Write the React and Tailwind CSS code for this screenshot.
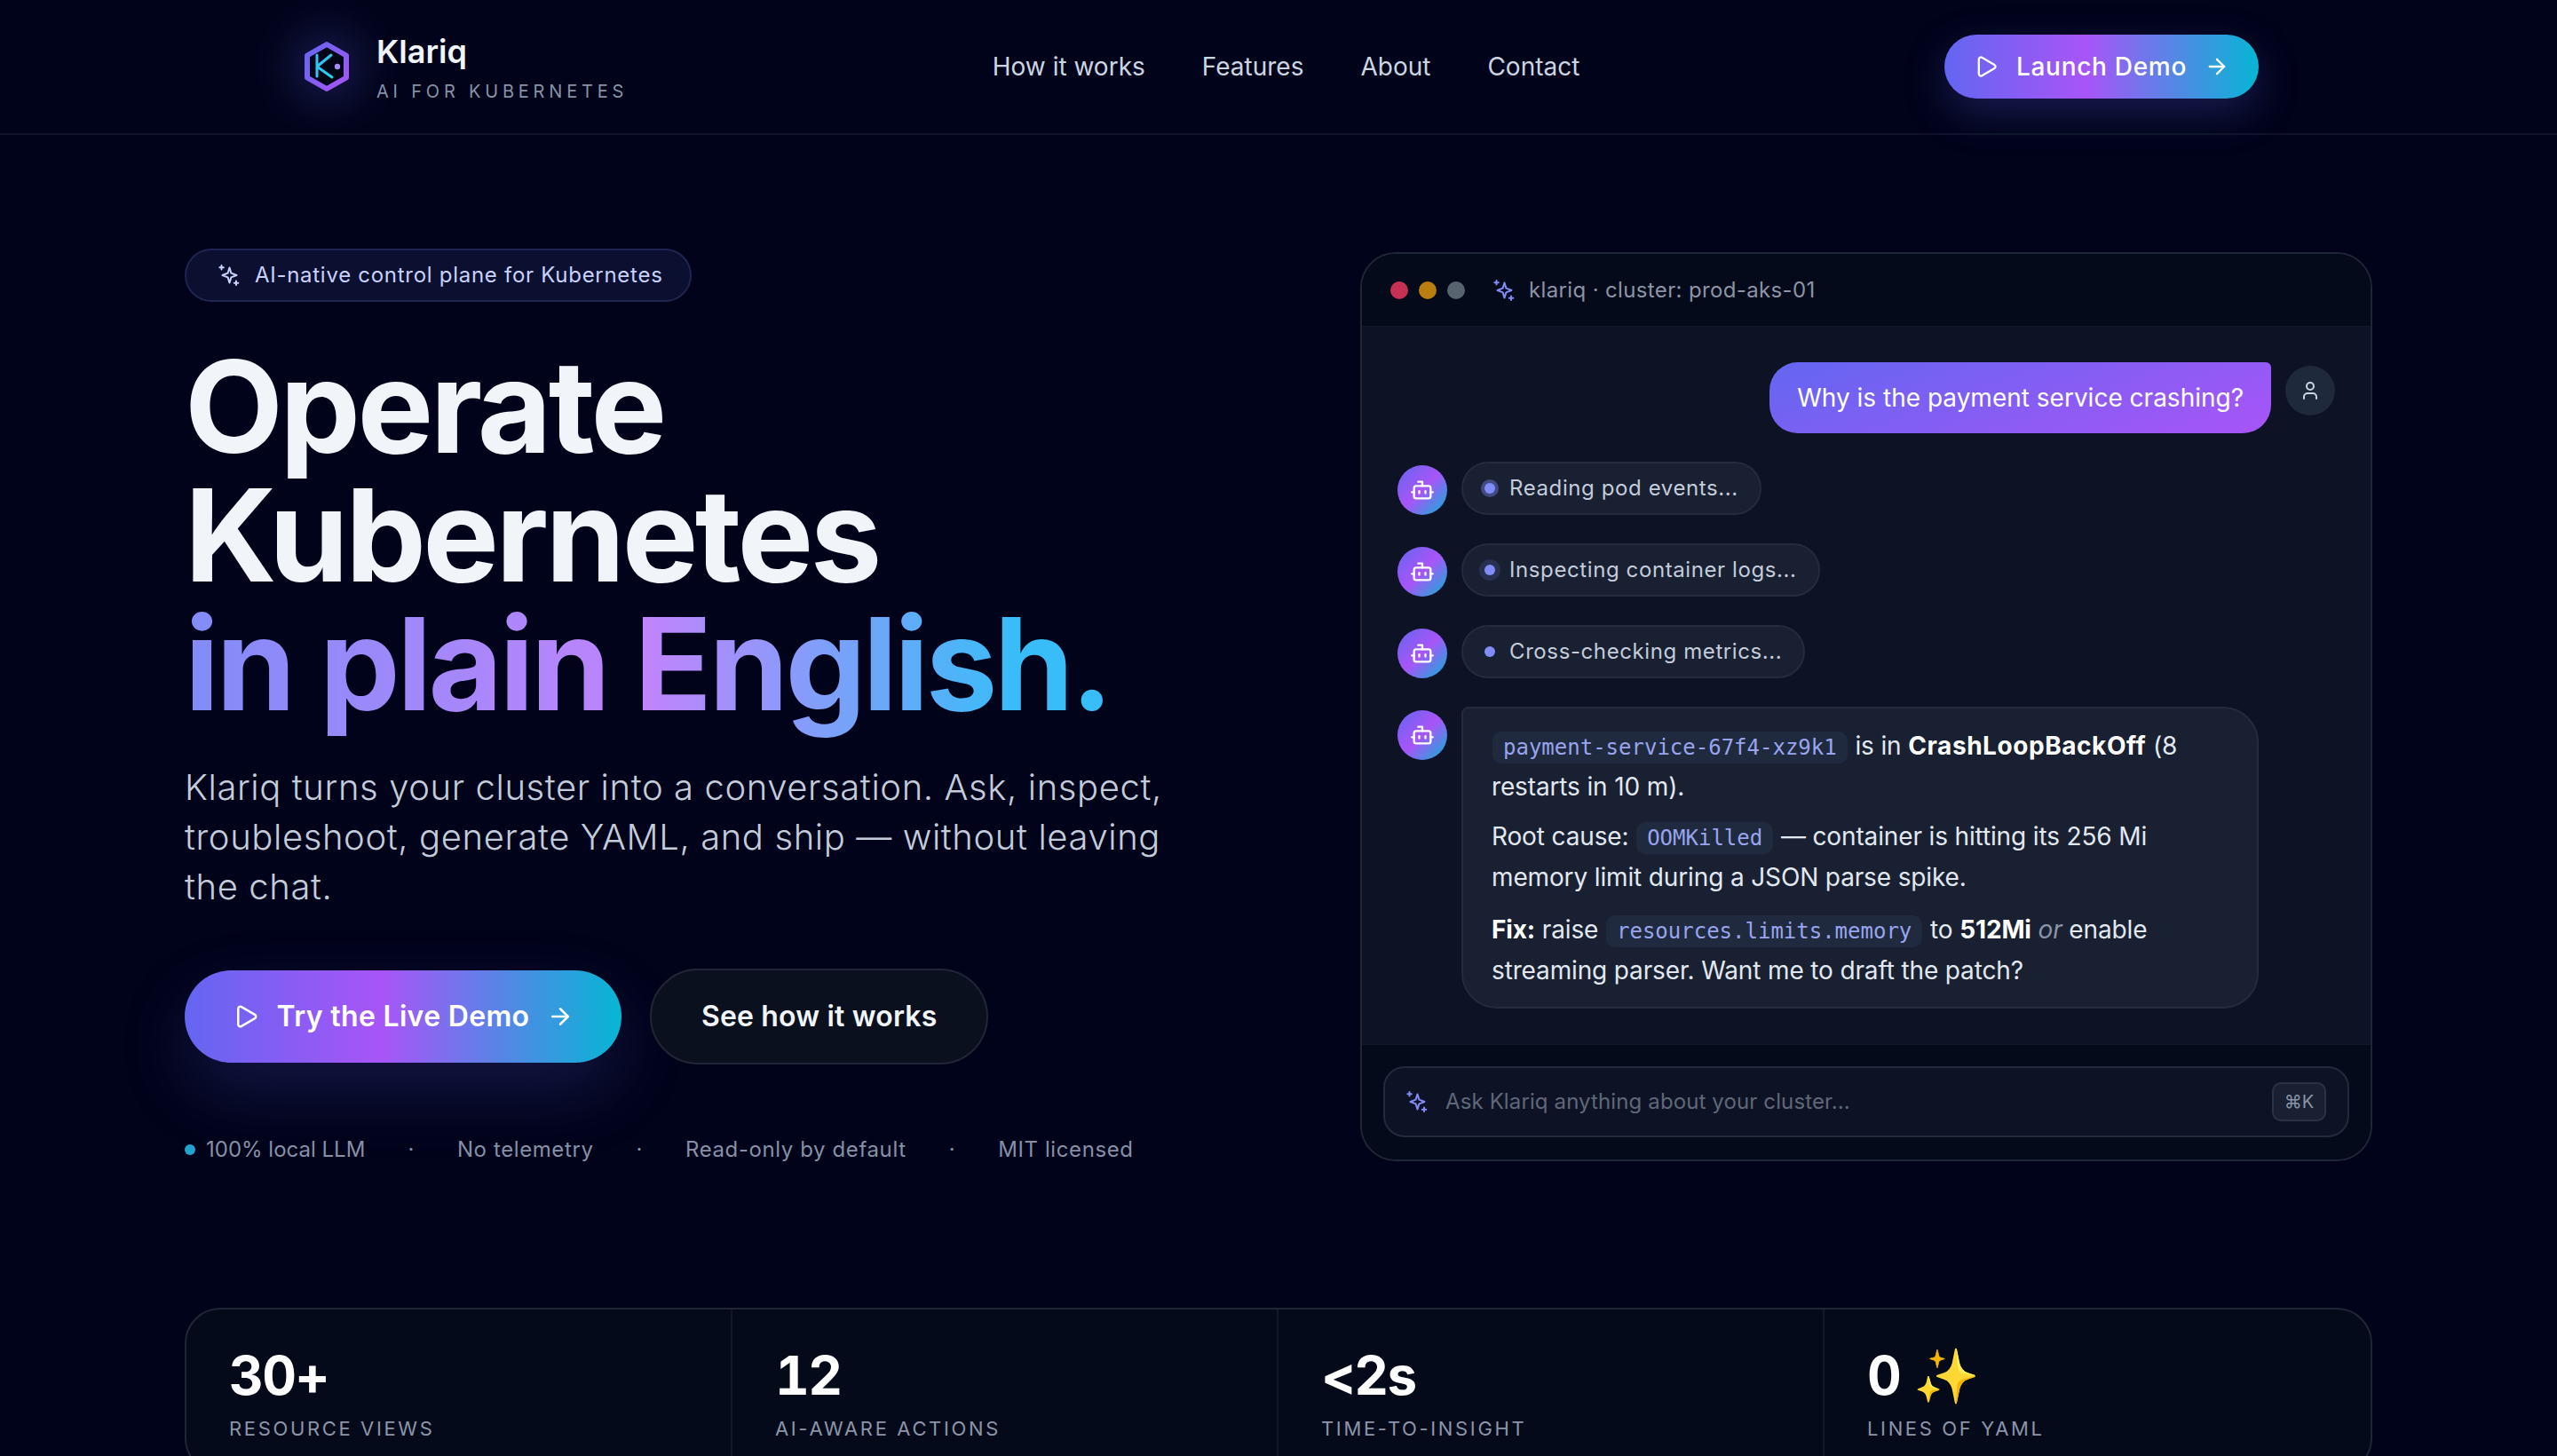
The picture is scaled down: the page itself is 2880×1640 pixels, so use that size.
import React from "react";
import { ArrowRight, Bot, Play, User } from "lucide-react";

const gradientBtn = "bg-[linear-gradient(90deg,#6366f1_0%,#a855f7_45%,#06b6d4_100%)]";

function Sparkle({ className }) {
  return (
    <svg viewBox="0 0 24 24" fill="none" stroke="currentColor" strokeWidth="2" strokeLinecap="round" strokeLinejoin="round" className={className}>
      <path d="M12.5 3.5l1.9 6.1 6.1 2.4-6.1 2.4-1.9 6.1-1.9-6.1-6.1-2.4 6.1-2.4z" />
      <path d="M3.5 1v4.5" />
      <path d="M1.3 3.3h4.5" />
      <path d="M20 18.5v4.5" />
      <path d="M17.8 20.7h4.5" />
    </svg>
  );
}

function Logo() {
  return (
    <svg viewBox="0 0 64 64" className="w-16 h-16 shrink-0">
      <defs>
        <linearGradient id="hexStroke" x1="0" y1="0" x2="1" y2="1">
          <stop offset="0" stopColor="#6366f1" />
          <stop offset="1" stopColor="#a855f7" />
        </linearGradient>
        <linearGradient id="kStroke" x1="0" y1="0" x2="1" y2="1">
          <stop offset="0" stopColor="#38bdf8" />
          <stop offset="1" stopColor="#22d3ee" />
        </linearGradient>
      </defs>
      <polygon points="32,7 54,19.5 54,44.5 32,57 10,44.5 10,19.5" fill="#020617" stroke="url(#hexStroke)" strokeWidth="6" strokeLinejoin="round" />
      <path d="M21 19v24M37 19L21 32l17 12" fill="none" stroke="url(#kStroke)" strokeWidth="3" strokeLinecap="round" strokeLinejoin="round" />
      <circle cx="44" cy="32" r="3.2" fill="#a78bfa" />
    </svg>
  );
}

function BotAvatar() {
  return (
    <div className="w-14 h-14 mt-1 shrink-0 rounded-full flex items-center justify-center text-white bg-[linear-gradient(135deg,#6366f1_0%,#a855f7_50%,#06b6d4_100%)]">
      <Bot size={28} strokeWidth={2} />
    </div>
  );
}

function StatusRow({ text, ring }) {
  return (
    <div className="flex items-start gap-4">
      <BotAvatar />
      <div className="h-[60px] flex items-center gap-4 px-6 rounded-full border-2 border-[#232b3c] bg-[#182032] text-[24px] tracking-[0.025em] text-[#c3ccda]">
        <span className={`w-3 h-3 rounded-full bg-[#818cf8] ${ring}`}></span>
        <span>{text}</span>
      </div>
    </div>
  );
}

function Chip({ children }) {
  return (
    <code className="inline-block mx-px px-3 h-9 leading-9 rounded-[10px] bg-[#1f2a3f] text-[24px] tracking-normal text-[#98a5ee] font-['DejaVu_Sans_Mono',monospace]">
      {children}
    </code>
  );
}

function Stat({ value, label, last }) {
  return (
    <div className={`px-12 pt-[38px] pb-8 ${last ? "" : "border-r-2 border-[#111827]"}`}>
      <div className="text-[60px] leading-[72px] font-bold tracking-[-0.025em] tabular-nums text-white">{value}</div>
      <div className="mt-2 text-[22px] tracking-[0.12em] uppercase text-[#8b95a9]">{label}</div>
    </div>
  );
}

export default function App() {
  return (
    <div className="h-[1640px] overflow-hidden bg-[#01031a] font-['Inter',sans-serif] text-white">
      {/* Nav */}
      <header className="h-[152px] border-b-2 border-[#0e1328]">
        <div className="w-[2208px] mx-auto h-full flex items-center justify-between">
          <div className="flex items-center gap-6">
            <div className="relative">
              <div className="absolute inset-[-12px] rounded-full bg-[#6366f1] opacity-20 blur-xl"></div>
              <div className="relative"><Logo /></div>
            </div>
            <div className="pt-[3px]">
              <div className="text-[36px] leading-[44px] font-semibold text-[#f1f5f9]">Klariq</div>
              <div className="mt-[9px] text-[20px] leading-7 tracking-[0.24em] text-[#8592a8]">AI FOR KUBERNETES</div>
            </div>
          </div>
          <nav className="flex items-center gap-16 text-[28px] text-[#cbd5e1]">
            <a>How it works</a>
            <a>Features</a>
            <a>About</a>
            <a>Contact</a>
          </nav>
          <button className={`h-[72px] w-[354px] rounded-full flex items-center justify-center gap-5 text-[28px] tracking-[0.025em] font-medium text-white shadow-[0_16px_48px_rgba(99,102,241,0.25)] ${gradientBtn}`}>
            <Play size={28} strokeWidth={2} />
            <span>Launch Demo</span>
            <ArrowRight size={28} strokeWidth={2} />
          </button>
        </div>
      </header>

      <main className="w-[2464px] mx-auto">
        {/* Hero */}
        <section className="pt-[128px] grid grid-cols-[1232px_1140px] justify-between items-start">
          <div>
            <div className="inline-flex items-center gap-[17px] h-[60px] pl-9 pr-[30px] rounded-full border-2 border-[#1e2550] bg-[#0c1030] text-[24px] tracking-[0.03em] text-[#c7d2fe]">
              <Sparkle className="w-6 h-6" />
              <span>AI-native control plane for Kubernetes</span>
            </div>
            <h1 className="mt-[45px] text-[144px] leading-[145px] font-bold tracking-[-0.025em] text-[#f1f5f9]">
              Operate
              <br />
              Kubernetes
              <br />
              <span className="bg-[linear-gradient(90deg,#818cf8,#c084fc_50%,#38bdf8_90%)] bg-clip-text text-transparent">in plain English.</span>
            </h1>
            <p className="mt-[39px] w-[1120px] text-[40px] leading-[56px] tracking-[0.015em] font-light text-[#c3ccda]">
              Klariq turns your cluster into a conversation. Ask, inspect, troubleshoot, generate YAML, and ship — without leaving the chat.
            </p>
            <div className="mt-[64px] flex items-center gap-8">
              <button className={`h-[104px] w-[492px] rounded-full flex items-center justify-center gap-5 text-[32px] tracking-[0.01em] font-semibold text-white shadow-[0_32px_80px_rgba(99,102,241,0.2)] ${gradientBtn}`}>
                <Play size={30} strokeWidth={2} />
                <span>Try the Live Demo</span>
                <ArrowRight size={30} strokeWidth={2} />
              </button>
              <button className="h-[108px] px-[56px] rounded-full border-2 border-[#1f2636] bg-[#0b101f] text-[32px] tracking-[0.005em] font-semibold text-[#f1f5f9]">
                See how it works
              </button>
            </div>
            <div className="mt-[78px] flex items-center gap-[48px] text-[24px] tracking-[0.025em] text-[#8590a6]">
              <span className="flex items-center gap-3 tracking-normal">
                <span className="w-3 h-3 rounded-full bg-[#22a3cf]"></span>
                100% local LLM
              </span>
              <span>·</span>
              <span>No telemetry</span>
              <span>·</span>
              <span>Read-only by default</span>
              <span>·</span>
              <span>MIT licensed</span>
            </div>
          </div>

          {/* Chat panel */}
          <div className="mt-1 h-[1024px] flex flex-col rounded-[40px] border-2 border-[#1f2636] overflow-hidden">
            <div className="h-[82px] shrink-0 flex items-center gap-3 px-8 bg-[#040a1a] border-b border-[#111827]">
              <span className="w-5 h-5 rounded-full bg-[#c73055]"></span>
              <span className="w-5 h-5 rounded-full bg-[#b97d10]"></span>
              <span className="w-5 h-5 rounded-full bg-[#56646f]"></span>
              <Sparkle className="ml-5 w-6 h-6 text-[#818cf8]" />
              <span className="ml-1 text-[24px] tracking-[0.015em] text-[#8a94a6]">klariq · cluster: prod-aks-01</span>
            </div>
            <div className="flex-1 bg-[#0d1325] px-10 pt-10 flex flex-col gap-8">
              <div className="flex justify-end gap-4">
                <div className="h-20 flex items-center px-[31px] rounded-[32px] rounded-tr-[6px] bg-[linear-gradient(160deg,#6366f1,#a855f7)] text-[28px] text-white">
                  Why is the payment service crashing?
                </div>
                <div className="w-14 h-14 mt-1 rounded-full bg-[#1e293b] flex items-center justify-center text-[#cbd5e1]">
                  <User size={24} strokeWidth={2} />
                </div>
              </div>
              <StatusRow text="Reading pod events..." ring="ring-4 ring-[#818cf8]/40" />
              <StatusRow text="Inspecting container logs..." ring="ring-[6px] ring-[#818cf8]/15" />
              <StatusRow text="Cross-checking metrics..." ring="" />
              <div className="flex items-start gap-4">
                <BotAvatar />
                <div className="w-[898px] px-8 pt-[19px] pb-[18px] rounded-[40px] rounded-tl-[8px] border-2 border-[#232b3c] bg-[#182032] text-[28px] leading-[46px] tracking-[-0.005em] text-[#e2e8f0]">
                  <p><Chip>payment-service-67f4-xz9k1</Chip> is in <b className="font-bold tracking-[0.02em] text-white">CrashLoopBackOff</b> (8 restarts in 10 m).</p>
                  <p className="mt-[10px]">Root cause: <Chip>OOMKilled</Chip> — container is hitting its 256 Mi memory limit during a JSON parse spike.</p>
                  <p className="mt-[13px]"><b className="font-bold text-white">Fix:</b> raise <Chip>resources.limits.memory</Chip> to <b className="font-bold text-white">512Mi</b> <i className="text-[#8a94a6]">or</i> enable streaming parser. Want me to draft the patch?</p>
                </div>
              </div>
            </div>
            <div className="h-[130px] shrink-0 px-6 pt-6 bg-[#040a1a] border-t border-[#111827]">
              <div className="h-[80px] flex items-center gap-5 px-6 rounded-[24px] border-2 border-[#232a3d] bg-[#0d1324]">
                <Sparkle className="w-6 h-6 text-[#818cf8]" />
                <span className="flex-1 text-[24px] tracking-[0.005em] text-[#5f6779]">Ask Klariq anything about your cluster...</span>
                <kbd className="w-[61px] h-11 flex items-center justify-center rounded-[10px] border-2 border-[#2a3245] bg-[#182032] text-[20px] text-[#8a94a6] font-['Inter',sans-serif]">⌘K</kbd>
              </div>
            </div>
          </div>
        </section>

        {/* Stats */}
        <section className="mt-[160px] grid grid-cols-4 rounded-[40px] border-2 border-[#1f2636] bg-[#040a1a]">
          <Stat value="30+" label="Resource views" />
          <Stat value="12" label="AI-aware actions" />
          <Stat value="<2s" label="Time-to-insight" />
          <Stat value="0 ✨" label="Lines of YAML" last />
        </section>
      </main>
    </div>
  );
}
